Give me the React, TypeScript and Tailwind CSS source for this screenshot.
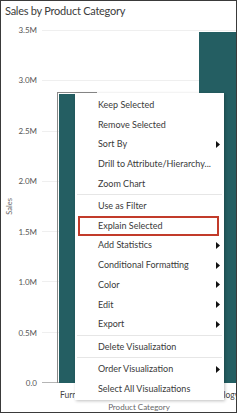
import { ReactNode } from 'react';

type MenuEntry =
  | { kind: 'item'; label: string; sub?: boolean; focus?: boolean }
  | { kind: 'sep' };

const menu: MenuEntry[] = [
  { kind: 'item', label: 'Keep Selected' },
  { kind: 'item', label: 'Remove Selected' },
  { kind: 'item', label: 'Sort By', sub: true },
  { kind: 'item', label: 'Drill to Attribute/Hierarchy...' },
  { kind: 'item', label: 'Zoom Chart' },
  { kind: 'sep' },
  { kind: 'item', label: 'Use as Filter' },
  { kind: 'item', label: 'Explain Selected', focus: true },
  { kind: 'item', label: 'Add Statistics', sub: true },
  { kind: 'item', label: 'Conditional Formatting', sub: true },
  { kind: 'item', label: 'Color', sub: true },
  { kind: 'item', label: 'Edit', sub: true },
  { kind: 'item', label: 'Export', sub: true },
  { kind: 'sep' },
  { kind: 'item', label: 'Delete Visualization' },
  { kind: 'sep' },
  { kind: 'item', label: 'Order Visualization', sub: true },
  { kind: 'item', label: 'Select All Visualizations' },
];

const ticks = ['3.5M', '3.0M', '2.5M', '2.0M', '1.5M', '1.0M', '0.5M', '0.0'];

const bars = [
  { label: 'Furniture', value: 2.865, selected: true },
  { label: 'Office Supplies', value: 2.3, selected: false },
  { label: 'Technology', value: 3.48, selected: false },
];

const MAX = 3.5;

function Arrow() {
  return (
    <svg width="4" height="7" viewBox="0 0 4 7" className="shrink-0">
      <polygon points="0,0 4,3.5 0,7" fill="#111" />
    </svg>
  );
}

function MenuRow({ label, sub, focus }: { label: string; sub?: boolean; focus?: boolean }) {
  if (focus) {
    return (
      <div className="h-[19.7px] ml-[3px] mr-[5px] flex items-center border-2 border-[#c23b2a] pl-[18px] pr-[2px]">
        <span className="flex-1 whitespace-nowrap">{label}</span>
      </div>
    );
  }
  return (
    <div className="h-[19.7px] flex items-center pl-[23px] pr-[4px]">
      <span className="flex-1 whitespace-nowrap">{label}</span>
      {sub && <Arrow />}
    </div>
  );
}

function Sep() {
  return (
    <div className="h-[2.8px] flex items-center px-[2px]">
      <div className="h-px w-full bg-[#e6e6e6]" />
    </div>
  );
}

function Chart({ children }: { children?: ReactNode }) {
  return (
    <div className="flex">
      {/* y axis */}
      <div className="w-[41px] h-[353px] flex shrink-0">
        <div className="w-[19px] flex items-center justify-center">
          <span className="[writing-mode:vertical-rl] rotate-180 text-[7.5px] text-[#666]">Sales</span>
        </div>
        <div className="flex-1 flex flex-col justify-between">
          {ticks.map((t) => (
            <div key={t} className="h-0 flex items-center justify-end pr-[5px] text-[8px] text-[#555]">
              {t}
            </div>
          ))}
        </div>
      </div>

      {/* plot */}
      <div className="w-[211px] shrink-0">
        <div className="relative h-[353px]">
          <div className="absolute inset-0 flex flex-col justify-between">
            {ticks.map((t, i) => (
              <div key={t} className={i === ticks.length - 1 ? 'h-px bg-[#b5b5b5]' : 'h-px bg-[#efefef]'} />
            ))}
          </div>
          <div className="absolute inset-0 grid grid-cols-3 items-end">
            {bars.map((b) => (
              <div key={b.label} className="flex justify-center items-end h-full">
                <div
                  className={b.selected ? 'w-[40px] border border-[#8a8a8a] border-b-0 p-[1px] pb-0 flex' : 'w-[37px] flex'}
                  style={{ height: `${(b.value / MAX) * 353 + (b.selected ? 2 : 0)}px` }}
                >
                  <div className="flex-1 bg-[#245e62]" />
                </div>
              </div>
            ))}
          </div>
        </div>
        <div className="grid grid-cols-3 pt-[7px] text-[8.5px] text-[#444] leading-[10px]">
          {bars.map((b) => (
            <div key={b.label} className="text-center whitespace-nowrap">
              {b.label}
            </div>
          ))}
        </div>
        {children}
      </div>
    </div>
  );
}

export default function App() {
  return (
    <div
      className="relative w-[237px] h-[413px] overflow-hidden bg-white border border-[#3a3a3a] text-[#333]"
      style={{ fontFamily: 'Lato, "Noto Sans", sans-serif' }}
    >
      {/* Title */}
      <div className="h-[29px] pl-[4px] pt-[2px] text-[11px] tracking-[-0.25px] leading-[16px] text-[#3c3c3c]">
        Sales by Product Category
      </div>

      <Chart>
        <div className="text-center text-[8px] text-[#666] leading-[10px] pt-[2px] w-[194px]">
          Product Category
        </div>
      </Chart>

      {/* Context menu */}
      <div className="absolute left-[74px] top-[92px] w-[149px] bg-white pt-[2px] pb-[1px] shadow-[1px_1px_3px_rgba(0,0,0,0.25)] text-[9px] text-[#3a3a3a] leading-[12px]">
        {menu.map((m, i) =>
          m.kind === 'sep' ? (
            <Sep key={i} />
          ) : (
            <MenuRow key={i} label={m.label} sub={m.sub} focus={m.focus} />
          )
        )}
      </div>
    </div>
  );
}
